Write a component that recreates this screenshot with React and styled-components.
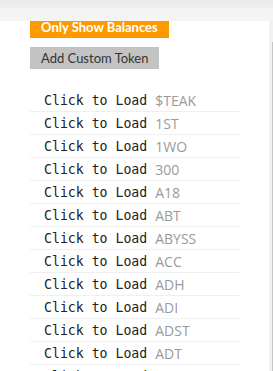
import React from "react";
import styled, { createGlobalStyle } from "styled-components";

const Global = createGlobalStyle`
  html, body { margin: 0; padding: 0; background: #fff; overflow: hidden; }
  body { width: 273px; height: 371px; }
`;

const Page = styled.div`
  position: relative;
  width: 273px;
  height: 371px;
  overflow: hidden;
  background: #fff;
`;

const TopBar = styled.div`
  position: absolute;
  top: 0;
  left: 0;
  right: 0;
  height: 21px;
  background: linear-gradient(#eaeaea 0px, #ededed 7px, #f3f3f3 9px, #f4f4f4 21px);
  z-index: 2;
`;

const Track = styled.div`
  position: absolute;
  top: 21px;
  right: 0;
  width: 4px;
  bottom: 0;
  background: #f1f1f1;
  z-index: 2;
`;

const Thumb = styled.div`
  position: absolute;
  top: 21px;
  right: 0;
  width: 1.5px;
  height: 330px;
  background: #c6c6c6;
`;

const Content = styled.div`
  display: flex;
  flex-direction: column;
  align-items: flex-start;
  padding: 16px 0 0 30px;
`;

const Button = styled.button`
  display: flex;
  align-items: center;
  height: 22px;
  padding: 0 11px;
  border: none;
  font-family: Lato, "Open Sans", sans-serif;
  font-size: 13px;
  font-weight: ${(p) => (p.$primary ? 700 : 400)};
  color: ${(p) => (p.$primary ? "#fff" : "#333")};
  background: ${(p) => (p.$primary ? "#fe9a00" : "#c3c3c3")};
  margin-bottom: ${(p) => p.$mb || 0}px;
  cursor: pointer;
`;

const List = styled.div`
  display: flex;
  flex-direction: column;
  width: 209px;
`;

const Row = styled.div`
  display: flex;
  align-items: center;
  height: 22px;
  padding-left: 14px;
  border-bottom: 1px solid #efefef;
  white-space: nowrap;
`;

const Load = styled.span`
  font-family: "DejaVu Sans Mono", "Liberation Mono", monospace;
  font-size: 13.2px;
  color: #222;
  margin-right: 8px;
`;

const Sym = styled.span`
  font-family: "Open Sans", "Noto Sans", sans-serif;
  font-size: 14px;
  color: #9a9a9a;
`;

const tokens = ["$TEAK", "1ST", "1WO", "300", "A18", "ABT", "ABYSS", "ACC", "ADH", "ADI", "ADST", "ADT", "ADX"];

export default function App() {
  return (
    <Page>
      <Global />
      <TopBar />
      <Track>
        <Thumb />
      </Track>
      <Content>
        <Button $primary $mb={9}>Only Show Balances</Button>
        <Button $mb={20}>Add Custom Token</Button>
        <List>
          {tokens.map((t) => (
            <Row key={t}>
              <Load>Click to Load</Load>
              <Sym>{t}</Sym>
            </Row>
          ))}
        </List>
      </Content>
    </Page>
  );
}
